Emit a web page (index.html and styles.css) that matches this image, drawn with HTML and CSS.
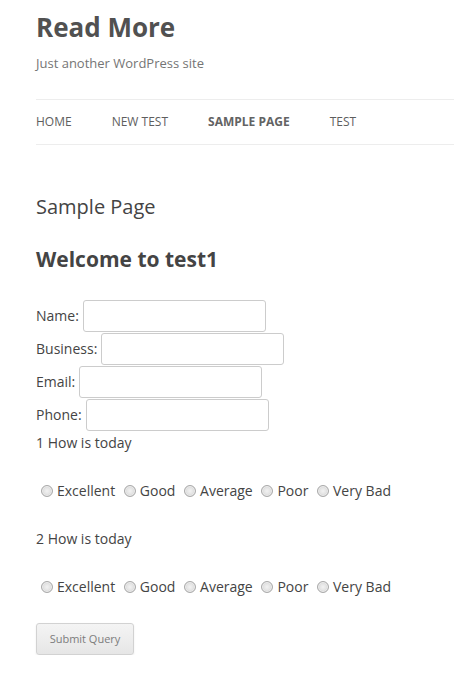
FILE: index.html
```html
<!DOCTYPE html>
<html lang="en">
<head>
<meta charset="utf-8">
<title>Sample Page | Read More</title>
<link rel="stylesheet" href="styles.css">
</head>
<body>
<div class="site">
  <header class="site-header">
    <h1 class="site-title">Read More</h1>
    <h2 class="site-description">Just another WordPress site</h2>
    <nav class="main-navigation">
      <ul class="nav-menu">
        <li><a href="#">Home</a></li>
        <li><a href="#">New Test</a></li>
        <li class="current"><a href="#">Sample Page</a></li>
        <li><a href="#">Test</a></li>
      </ul>
    </nav>
  </header>
  <main class="content">
    <h1 class="entry-title">Sample Page</h1>
    <h2 class="welcome">Welcome to test1</h2>
    <form class="survey">
      <div class="field"><label>Name:</label><input type="text" class="text-input"></div>
      <div class="field"><label>Business:</label><input type="text" class="text-input"></div>
      <div class="field"><label>Email:</label><input type="text" class="text-input"></div>
      <div class="field"><label>Phone:</label><input type="text" class="text-input"></div>
      <p class="question">1 How is today</p>
      <p class="options">
        <label><input type="radio" name="q1" class="radio">Excellent</label>
        <label><input type="radio" name="q1" class="radio">Good</label>
        <label><input type="radio" name="q1" class="radio">Average</label>
        <label><input type="radio" name="q1" class="radio">Poor</label>
        <label><input type="radio" name="q1" class="radio">Very Bad</label>
      </p>
      <p class="question">2 How is today</p>
      <p class="options">
        <label><input type="radio" name="q2" class="radio">Excellent</label>
        <label><input type="radio" name="q2" class="radio">Good</label>
        <label><input type="radio" name="q2" class="radio">Average</label>
        <label><input type="radio" name="q2" class="radio">Poor</label>
        <label><input type="radio" name="q2" class="radio">Very Bad</label>
      </p>
      <button type="button" class="submit">Submit Query</button>
    </form>
  </main>
</div>
</body>
</html>
```

FILE: styles.css
```css
html, body {
  margin: 0;
  padding: 0;
  background: #fff;
}
body {
  font-family: "Open Sans", "Liberation Sans", sans-serif;
  font-size: 14px;
  line-height: 24px;
  color: #444;
}
.site {
  padding: 3px 0 0 36px;
}
.site-title {
  margin: 0;
  font-size: 26px;
  line-height: 48px;
  font-weight: 700;
  color: #515151;
}
.site-description {
  margin: 0;
  font-size: 13px;
  line-height: 24px;
  font-weight: 400;
  color: #757575;
}
.main-navigation {
  margin-top: 24px;
}
.nav-menu {
  list-style: none;
  margin: 0;
  padding: 0;
  display: flex;
  border-top: 1px solid #ededed;
  border-bottom: 1px solid #ededed;
}
.nav-menu li {
  margin-right: 40px;
}
.nav-menu a {
  display: block;
  font-size: 12px;
  line-height: 44px;
  text-transform: uppercase;
  color: #5e5e5e;
  text-decoration: none;
}
.nav-menu .current a {
  font-weight: 700;
  color: #636363;
}
.content {
  padding-top: 50px;
}
.entry-title {
  margin: 0;
  font-size: 20px;
  line-height: 24px;
  font-weight: 400;
  color: #444;
}
.welcome {
  margin: 25px 0 0;
  font-size: 21px;
  line-height: 31px;
  font-weight: 700;
  color: #444;
}
.survey {
  margin-top: 24px;
}
.field {
  display: flex;
  align-items: center;
  column-gap: 4px;
  height: 32px;
  padding-top: 1px;
}
.text-input {
  box-sizing: border-box;
  width: 183px;
  height: 32px;
  margin: 0;
  padding: 6px;
  border: 1px solid #ccc;
  border-radius: 3px;
  font: inherit;
  color: #444;
  background: #fff;
}
.question {
  margin: 0 0 24px;
}
.options {
  margin: 0 0 24px;
  white-space: nowrap;
}
.radio {
  -webkit-appearance: none;
  appearance: none;
  box-sizing: border-box;
  width: 12px;
  height: 12px;
  margin: 0 4px 0 5px;
  vertical-align: -1px;
  border: 1px solid #a9a9a9;
  border-radius: 50%;
  background: radial-gradient(circle at 50% 50%, #f2f2f2 0, #e4e4e4 45%, #cfcfcf 75%, #bdbdbd 100%);
  box-shadow: inset 0 0 0 1px #eee;
}
.submit {
  display: block;
  box-sizing: border-box;
  width: 98px;
  height: 32px;
  margin: 1px 0 0;
  padding: 0;
  font-family: inherit;
  font-size: 11px;
  line-height: 16px;
  color: #7c7c7c;
  background: linear-gradient(#f4f4f4, #e6e6e6);
  border: 1px solid #d2d2d2;
  border-radius: 3px;
  box-shadow: 0 1px 2px rgba(64, 64, 64, 0.1);
}
```
